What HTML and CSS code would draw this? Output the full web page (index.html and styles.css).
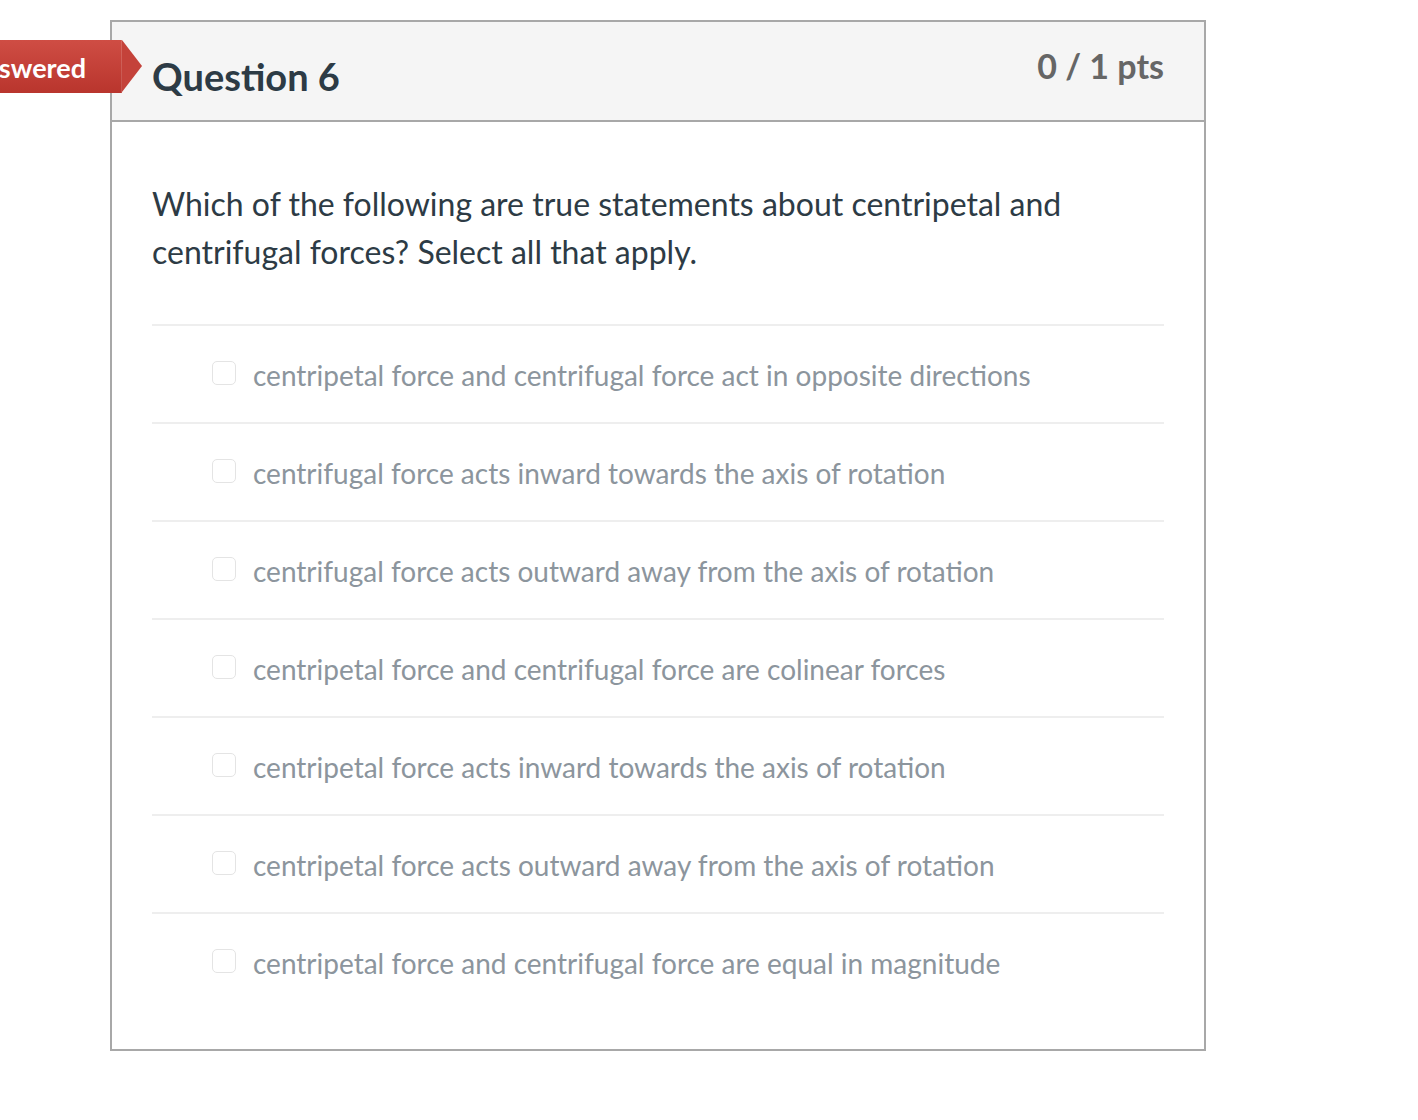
FILE: index.html
```html
<!DOCTYPE html>
<html>
<head>
<meta charset="utf-8">
<link rel="stylesheet" href="styles.css">
</head>
<body>
<div class="page">
  <div class="question">
    <div class="q-header">
      <h2 class="q-title">Question 6</h2>
      <div class="q-pts">0 / 1 pts</div>
    </div>
    <div class="q-body">
      <p class="q-text">Which of the following are true statements about centripetal and centrifugal forces? Select all that apply.</p>
      <div class="answers">
        <div class="answer"><span class="box"></span><span class="label">centripetal force and centrifugal force act in opposite directions</span></div>
        <div class="answer"><span class="box"></span><span class="label">centrifugal force acts inward towards the axis of rotation</span></div>
        <div class="answer"><span class="box"></span><span class="label">centrifugal force acts outward away from the axis of rotation</span></div>
        <div class="answer"><span class="box"></span><span class="label">centripetal force and centrifugal force are colinear forces</span></div>
        <div class="answer"><span class="box"></span><span class="label">centripetal force acts inward towards the axis of rotation</span></div>
        <div class="answer"><span class="box"></span><span class="label">centripetal force acts outward away from the axis of rotation</span></div>
        <div class="answer"><span class="box"></span><span class="label">centripetal force and centrifugal force are equal in magnitude</span></div>
      </div>
    </div>
  </div>
  <div class="flag"><span class="flag-text">Unanswered</span></div>
</div>
</body>
</html>
```
FILE: styles.css
```css
html, body {
  margin: 0;
  padding: 0;
  background: #fff;
  font-family: Lato, "Open Sans", "Liberation Sans", sans-serif;
}
.page {
  position: relative;
  padding: 20px 0 0 110px;
}
.question {
  width: 1092px;
  height: 1027px;
  border: 2px solid #a8a8a8;
  display: flex;
  flex-direction: column;
}
.q-header {
  background: #f5f5f5;
  height: 98px;
  border-bottom: 2px solid #a8a8a8;
  display: flex;
  justify-content: space-between;
  padding: 0 40px;
}
.q-title {
  margin: 0;
  padding-top: 30px;
  font-size: 38px;
  font-weight: 700;
  color: #2d3b45;
  line-height: 48px;
}
.q-pts {
  padding-top: 20px;
  font-size: 34px;
  font-weight: 700;
  color: #666;
  line-height: 48px;
}
.q-body {
  padding: 58px 40px 0 40px;
}
.q-text {
  margin: 0 0 48px 0;
  font-size: 32px;
  line-height: 48px;
  color: #2d3b45;
  padding-right: 90px;
}
.answer {
  border-top: 2px solid #eeeeee;
  height: 96px;
  display: flex;
  align-items: center;
  padding-left: 60px;
}
.box {
  width: 22px;
  height: 22px;
  border: 1px solid #e4e4e4;
  border-radius: 5px;
  margin-right: 17px;
  margin-top: -2px;
  flex: none;
}
.label {
  font-size: 28px;
  color: #8c959d;
  padding-top: 2px;
}
.flag {
  position: absolute;
  left: 0;
  top: 40px;
  width: 122px;
  height: 53px;
  background: linear-gradient(#cf4d44, #b9352d);
  overflow: hidden;
}
.flag-text {
  position: absolute;
  right: 36px;
  top: 0;
  color: #fff;
  font-size: 27px;
  font-weight: 700;
  line-height: 53px;
  white-space: nowrap;
  margin-top: 1px;
}
.flag::after {
  content: "";
  position: absolute;
  left: 121px;
  top: 0;
  width: 1px;
  height: 53px;
  background: rgba(255,255,255,0.15);
}
.page::after {
  content: "";
  position: absolute;
  left: 122px;
  top: 40px;
  border-top: 26.5px solid transparent;
  border-bottom: 26.5px solid transparent;
  border-left: 20px solid #c4423a;
}
```
